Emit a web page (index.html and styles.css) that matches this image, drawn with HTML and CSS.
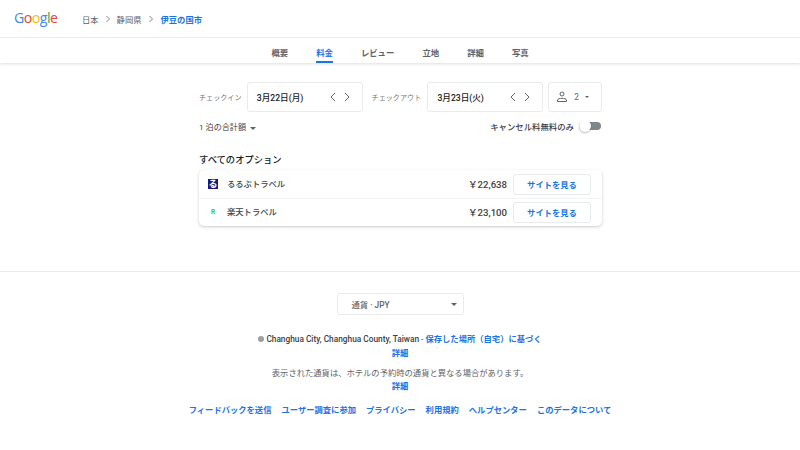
FILE: index.html
```html
<!DOCTYPE html>
<html lang="ja">
<head>
    <meta charset="UTF-8" />
    <title>伊豆の国市 - 料金</title>
    <link rel="stylesheet" href="styles.css">
</head>
<body>
    <header class="topbar">
        <div class="logo"><span class="g-blue">G</span><span class="g-red">o</span><span class="g-yellow">o</span><span class="g-blue">g</span><span class="g-green">l</span><span class="g-red">e</span></div>
        <nav class="crumbs">
            <span>日本</span>
            <svg class="crumb-arrow" viewBox="0 0 8 10"><path d="M2.500 2l3 3-3 3" /></svg>
            <span>静岡県</span>
            <svg class="crumb-arrow" viewBox="0 0 8 10"><path d="M2.500 2l3 3-3 3" /></svg>
            <span class="crumb-current">伊豆の国市</span>
        </nav>
    </header>

    <nav class="tabs">
        <span class="tab">概要</span>
        <span class="tab active">料金</span>
        <span class="tab">レビュー</span>
        <span class="tab">立地</span>
        <span class="tab">詳細</span>
        <span class="tab">写真</span>
    </nav>

    <main class="content">
        <div class="dates">
            <span class="date-label">チェックイン</span>
            <div class="box date-box">
                <span class="date-text">3月22日(月)</span>
                <span class="date-arrows">
                    <svg viewBox="0 0 8 10"><path d="M6 1L2 5l4 4" /></svg>
                    <svg viewBox="0 0 8 10"><path d="M2 1l4 4-4 4" /></svg>
                </span>
            </div>
            <span class="date-label label-out">チェックアウト</span>
            <div class="box date-box">
                <span class="date-text">3月23日(火)</span>
                <span class="date-arrows">
                    <svg viewBox="0 0 8 10"><path d="M6 1L2 5l4 4" /></svg>
                    <svg viewBox="0 0 8 10"><path d="M2 1l4 4-4 4" /></svg>
                </span>
            </div>
            <div class="box guests">
                <svg class="person" viewBox="0 0 12 12"><circle cx="6" cy="3" r="2" /><path d="M1.500 10.500V9c0-1 2.500-1.700 4.500-1.700s4.500.7 4.500 1.700v1.500z" /></svg>
                <span>2</span>
                <span class="caret small"></span>
            </div>
        </div>

        <div class="filters">
            <div class="total">1 泊の合計額<span class="caret"></span></div>
            <div class="cancel">
                <span>キャンセル料無料のみ</span>
                <span class="switch"><span class="knob"></span></span>
            </div>
        </div>

        <h2 class="options-title">すべてのオプション</h2>

        <div class="options">
            <div class="option">
                <span class="site-icon rurubu">る</span>
                <span class="site-name">るるぶトラベル</span>
                <span class="price">￥22,638</span>
                <span class="site-btn">サイトを見る</span>
            </div>
            <div class="option">
                <span class="site-icon rakuten">R</span>
                <span class="site-name">楽天トラベル</span>
                <span class="price">￥23,100</span>
                <span class="site-btn">サイトを見る</span>
            </div>
        </div>
    </main>

    <footer class="footer">
        <div class="currency">
            <span>通貨 · JPY</span>
            <span class="caret"></span>
        </div>
        <p class="location"><span class="dot"></span><b>Changhua City, Changhua County, Taiwan</b> <span class="sep">-</span> <a>保存した場所（自宅）に基づく</a></p>
        <p class="more"><a>詳細</a></p>
        <p class="note">表示された通貨は、ホテルの予約時の通貨と異なる場合があります。</p>
        <p class="more"><a>詳細</a></p>
        <div class="links">
            <a>フィードバックを送信</a>
            <a>ユーザー調査に参加</a>
            <a>プライバシー</a>
            <a>利用規約</a>
            <a>ヘルプセンター</a>
            <a>このデータについて</a>
        </div>
    </footer>
</body>
</html>
```

FILE: styles.css
```css
:root {
    --blue: #1a73e8;
    --text: #3c4043;
    --muted: #5f6368;
    --line: #e8eaed;
}

* {
    margin: 0;
    padding: 0;
    box-sizing: border-box;
}

body {
    font-family: Roboto, "Noto Sans CJK JP", sans-serif;
    font-size: 8.3px;
    color: var(--text);
    background: #fff;
    overflow: hidden;
}

a {
    color: var(--blue);
}

.topbar {
    height: 38px;
    display: flex;
    align-items: center;
    padding-left: 14px;
    border-bottom: 1px solid #efefef;
}

.logo {
    width: 68px;
    font-family: "Open Sans", sans-serif;
    font-size: 14.2px;
    letter-spacing: -0.55px;
    line-height: 1;
}

.g-blue { color: #4285f4; }
.g-red { color: #ea4335; }
.g-yellow { color: #fbbc05; }
.g-green { color: #34a853; }

.crumbs {
    display: flex;
    align-items: center;
    color: var(--muted);
    font-size: 8.3px;
}

.crumb-arrow {
    width: 8px;
    height: 10px;
    margin: 0 5px;
    fill: none;
    stroke: #80868b;
    stroke-width: 1;
}

.crumb-current {
    margin-left: 1px;
    color: var(--blue);
    font-weight: 700;
}

.tabs {
    height: 25px;
    display: flex;
    justify-content: center;
    gap: 28px;
    font-size: 8.4px;
    box-shadow: 0 1px 3px rgba(60, 64, 67, 0.18);
}

.tab {
    padding-top: 8px;
    font-weight: 700;
    color: var(--muted);
    border-bottom: 2px solid transparent;
}

.tab.active {
    color: var(--blue);
    border-bottom-color: var(--blue);
}

.content {
    width: 403px;
    margin: 19px auto 0 199px;
}

.dates {
    display: flex;
    align-items: center;
    height: 30px;
}

.date-label {
    width: 48px;
    font-size: 7.1px;
    color: #70757a;
}

.label-out {
    width: 55px;
    margin-left: 9px;
    margin-right: 1px;
}

.box {
    height: 30px;
    border: 1px solid var(--line);
    border-radius: 3px;
    display: flex;
    align-items: center;
}

.date-box {
    width: 116px;
    padding: 0 11px 0 9px;
    justify-content: space-between;
}

.date-text {
    font-size: 8.6px;
    font-weight: 500;
    color: #202124;
}

.date-arrows {
    display: flex;
    gap: 6px;
}

.date-arrows svg {
    width: 8px;
    height: 10px;
    fill: none;
    stroke: #5f6368;
    stroke-width: 1;
}

.guests {
    width: 54px;
    margin-left: 5px;
    padding-left: 7px;
    gap: 6px;
    color: var(--muted);
}

.person {
    width: 12px;
    height: 12px;
    fill: none;
    stroke: #5f6368;
    stroke-width: 1;
}

.caret {
    display: inline-block;
    width: 0;
    height: 0;
    margin-left: 4px;
    border-left: 3px solid transparent;
    border-right: 3px solid transparent;
    border-top: 3px solid #5f6368;
}

.caret.small {
    margin-left: 0;
    border-width: 2.5px 2.5px 0;
    border-top-color: #5f6368;
}

.filters {
    display: flex;
    justify-content: space-between;
    align-items: center;
    height: 16px;
    margin-top: 6px;
}

.total {
    font-size: 8.1px;
}

.cancel {
    display: flex;
    align-items: center;
    gap: 5px;
    font-size: 8.4px;
    font-weight: 500;
}

.switch {
    position: relative;
    width: 22px;
    height: 8px;
    margin-right: 1px;
    border-radius: 4px;
    background: #80868b;
}

.knob {
    position: absolute;
    left: 0;
    top: -2px;
    width: 12px;
    height: 12px;
    border-radius: 50%;
    background: #fff;
    box-shadow: 0 1px 2px rgba(60, 64, 67, 0.35);
}

.options-title {
    margin-top: 19px;
    font-size: 9.3px;
    font-weight: 500;
    line-height: 14px;
    color: #202124;
}

.options {
    margin-top: 3px;
    border-radius: 5px;
    box-shadow: 0 1px 3px rgba(60, 64, 67, 0.28);
}

.option {
    display: flex;
    align-items: center;
    height: 28px;
    padding: 0 11px 0 9px;
}

.option + .option {
    padding-bottom: 1px;
    border-top: 1px solid #f1f3f4;
}

.site-icon {
    width: 10px;
    height: 10px;
    margin-right: 9px;
    font-size: 9px;
    font-weight: 700;
    line-height: 10px;
    text-align: center;
}

.rurubu {
    color: #fff;
    background: #1a1a78;
}

.rakuten {
    font-size: 6.5px;
    color: #2ecc40;
    background: #fff;
}

.site-name {
    flex: 1;
    padding-bottom: 2px;
    font-weight: 500;
}

.price {
    margin-right: 6px;
    font-size: 9.6px;
    font-weight: 500;
}

.site-btn {
    width: 78px;
    height: 21px;
    display: flex;
    align-items: center;
    justify-content: center;
    color: var(--blue);
    font-weight: 700;
    border: 1px solid var(--line);
    border-radius: 3px;
}

.footer {
    margin-top: 45px;
    padding-top: 21px;
    border-top: 1px solid var(--line);
    text-align: center;
}

.currency {
    width: 127px;
    height: 22px;
    margin: 0 auto;
    padding: 0 6px 0 14px;
    display: flex;
    align-items: center;
    justify-content: space-between;
    color: var(--muted);
    font-weight: 500;
    border: 1px solid var(--line);
    border-radius: 3px;
}

.location {
    margin-top: 17px;
    line-height: 14px;
}

.dot {
    display: inline-block;
    width: 6px;
    height: 6px;
    margin-right: 2px;
    border-radius: 50%;
    background: #9aa0a6;
}

.location b {
    font-weight: 500;
    color: var(--text);
}

.sep {
    color: var(--muted);
}

.location a {
    font-weight: 700;
}

.more {
    line-height: 14px;
    font-weight: 700;
}

.note {
    margin-top: 8px;
    line-height: 11px;
    color: var(--muted);
}

.links {
    margin-top: 10px;
    display: flex;
    justify-content: center;
    gap: 10px;
    font-weight: 700;
}
```
